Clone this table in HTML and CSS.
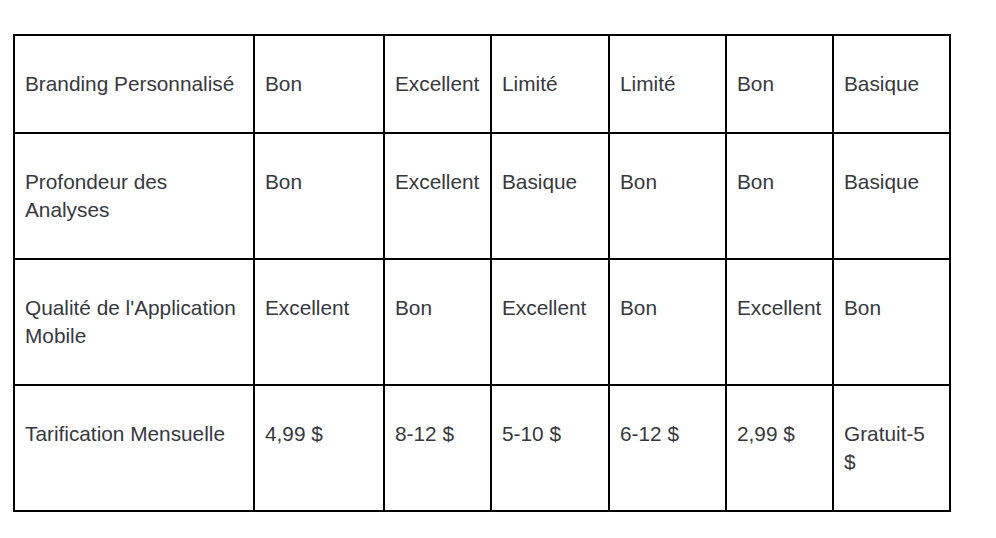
FILE: index.html
```html
<!DOCTYPE html>
<html lang="fr">
<head>
<meta charset="utf-8">
<title>Comparaison</title>
<link rel="stylesheet" href="styles.css">
</head>
<body>
<div class="page">
  <table class="compare">
    <colgroup>
      <col class="c1"><col class="c2"><col class="c3"><col class="c4"><col class="c5"><col class="c6"><col class="c7">
    </colgroup>
    <tbody>
      <tr>
        <td>Branding Personnalisé</td>
        <td>Bon</td>
        <td>Excellent</td>
        <td>Limité</td>
        <td>Limité</td>
        <td>Bon</td>
        <td>Basique</td>
      </tr>
      <tr>
        <td>Profondeur des Analyses</td>
        <td>Bon</td>
        <td>Excellent</td>
        <td>Basique</td>
        <td>Bon</td>
        <td>Bon</td>
        <td>Basique</td>
      </tr>
      <tr>
        <td>Qualité de l'Application Mobile</td>
        <td>Excellent</td>
        <td>Bon</td>
        <td>Excellent</td>
        <td>Bon</td>
        <td>Excellent</td>
        <td>Bon</td>
      </tr>
      <tr>
        <td>Tarification Mensuelle</td>
        <td>4,99 $</td>
        <td>8-12 $</td>
        <td>5-10 $</td>
        <td>6-12 $</td>
        <td>2,99 $</td>
        <td>Gratuit-5 $</td>
      </tr>
    </tbody>
  </table>
</div>
</body>
</html>
```
FILE: styles.css
```css
html, body {
  margin: 0;
  padding: 0;
  background: #ffffff;
}
.page {
  padding: 34px 0 0 13px;
}
.compare {
  border-collapse: collapse;
  table-layout: fixed;
  width: 938px;
  font-family: "Liberation Sans", Arial, sans-serif;
  font-size: 20.8px;
  line-height: 28px;
  color: #36393e;
}
.compare td {
  border: 2px solid #000000;
  padding: 34px 10px 34px 10px;
  vertical-align: top;
  text-align: left;
}
.compare .c1 { width: 240px; }
.compare .c2 { width: 130px; }
.compare .c3 { width: 107px; }
.compare .c4 { width: 118px; }
.compare .c5 { width: 117px; }
.compare .c6 { width: 107px; }
.compare .c7 { width: 117px; }
```
